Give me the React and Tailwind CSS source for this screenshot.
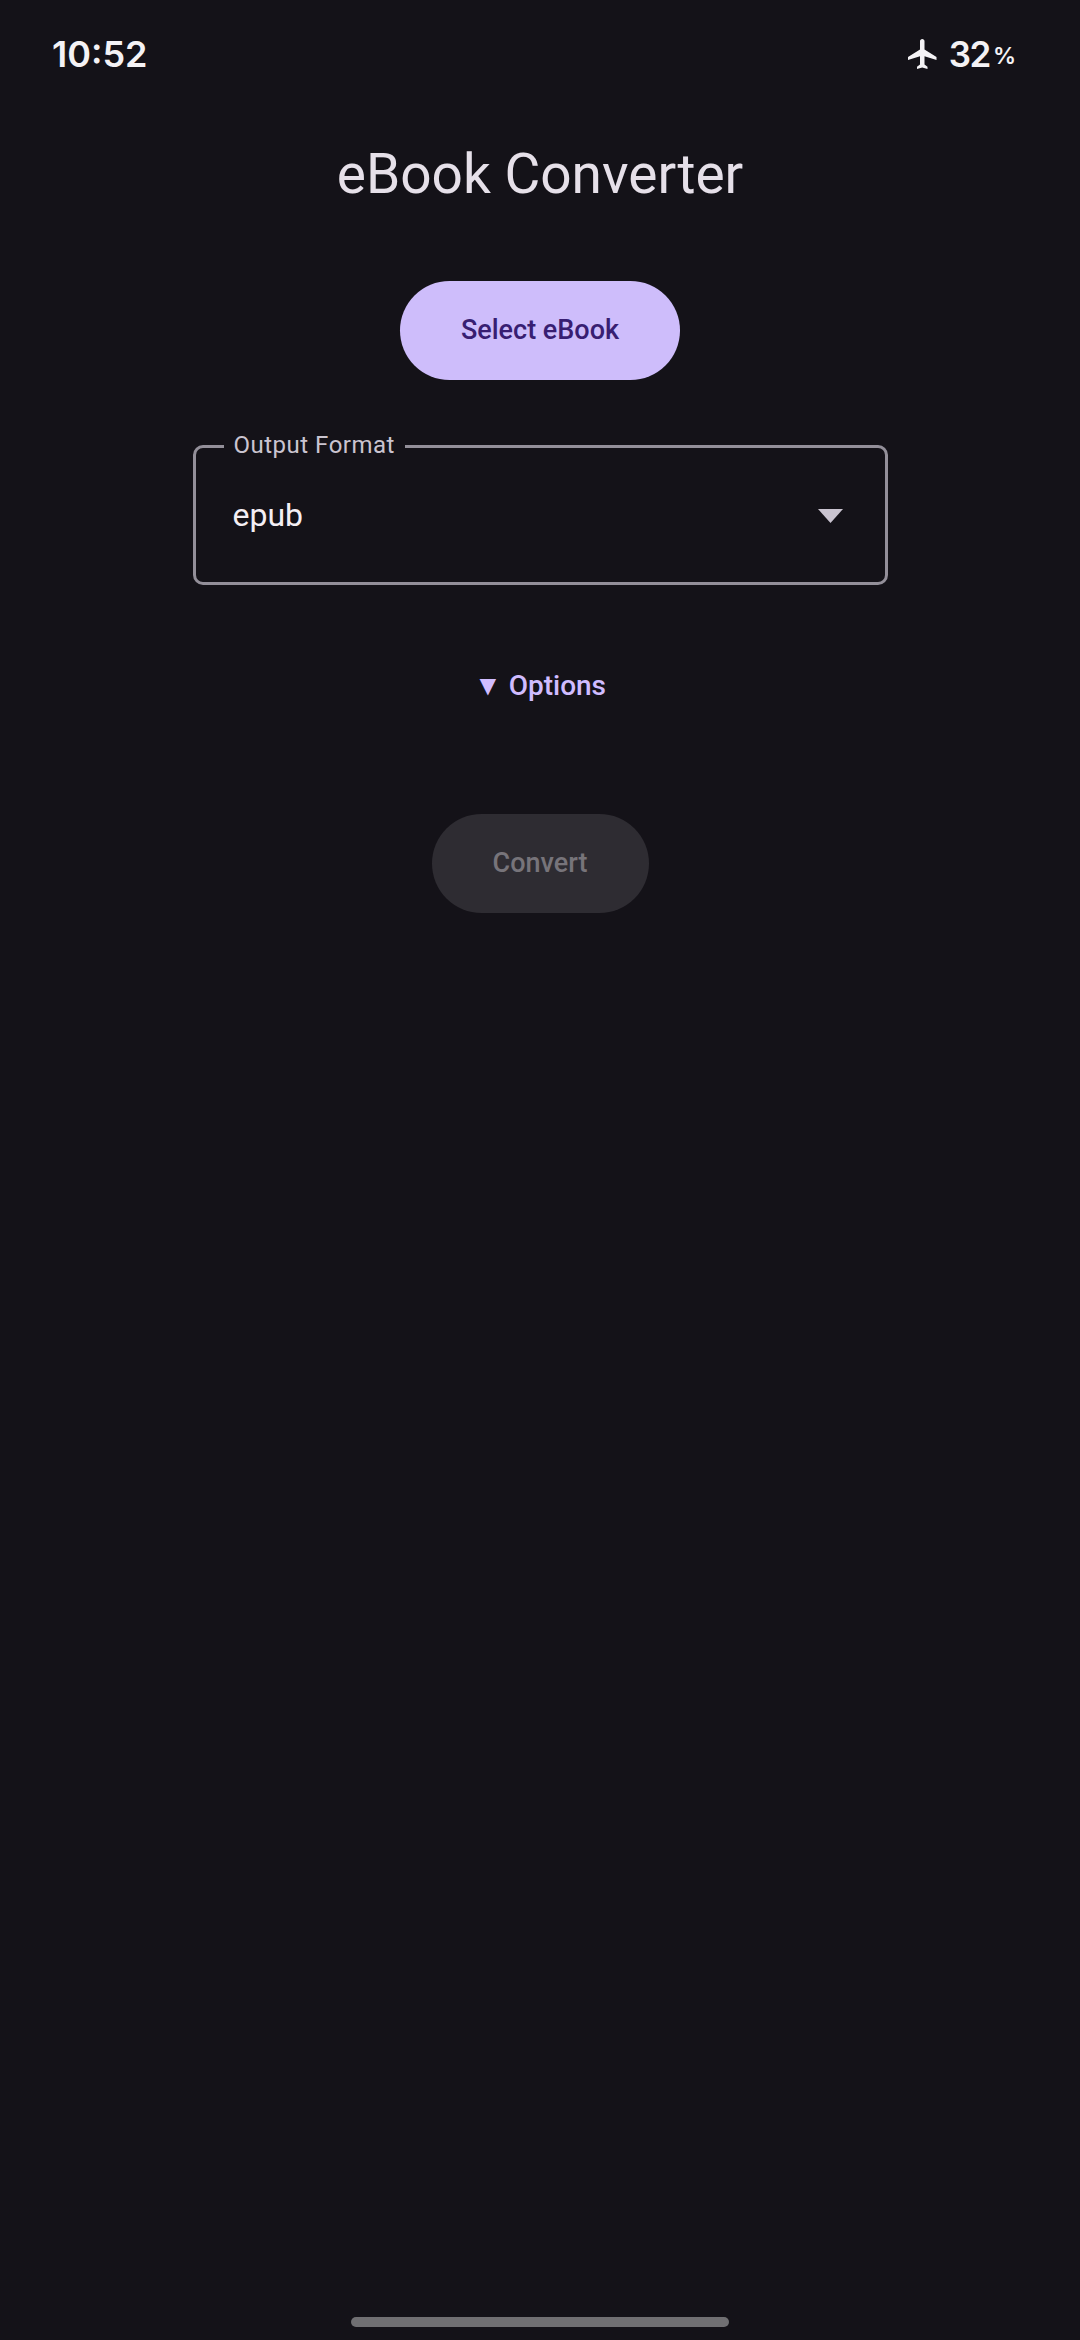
export default function App() {
  return (
    <div className="flex flex-col items-center w-[1080px] h-[2340px] bg-[#141218] font-['Roboto',sans-serif] overflow-hidden">
      {/* status bar */}
      <div className="flex justify-between items-center w-full h-[54px] mt-[27px] pl-[52px] pr-[64px] text-[#f4f2f5] font-['Inter',sans-serif]">
        <span className="text-[36px] font-semibold leading-none">10:52</span>
        <div className="flex items-center">
          <svg viewBox="0 0 24 24" className="w-[36px] h-[36px] mr-[8px]" fill="currentColor">
            <path d="M21 16v-2l-8-5V3.5c0-.83-.67-1.5-1.5-1.5S10 2.67 10 3.5V9l-8 5v2l8-2.5V19l-2 1.5V22l3.5-1 3.5 1v-1.5L13 19v-5.5l8 2.5z" />
          </svg>
          <span className="text-[35px] font-semibold leading-none tracking-[-1.5px]">32</span>
          <span className="text-[23px] font-semibold leading-none ml-[3px] mt-[4px]">%</span>
        </div>
      </div>

      <h1 className="mt-[51px] h-[84px] text-[55px] leading-[84px] text-[#e6e0e9]">eBook Converter</h1>

      <button className="mt-[65px] w-[280px] h-[99px] rounded-[50px] bg-[#cebdfb] text-[#381e72] text-[27px] font-medium">Select eBook</button>

      <div className="relative mt-[65px] w-[695px] h-[140px] flex items-center justify-between pl-[37px] pr-[42px] border-[3px] border-[#938f99] rounded-[10px]">
        <span className="absolute left-[28px] -top-[19px] px-[10px] bg-[#141218] text-[#cac4d0] text-[24px] leading-[32px] tracking-[0.5px]">Output Format</span>
        <span className="text-[32px] text-[#f4eff4] leading-none">epub</span>
        <svg viewBox="0 0 25 14" className="w-[25px] h-[14px] mt-[2px]" fill="#cac4d0">
          <path d="M0 0h25L12.5 14z" />
        </svg>
      </div>

      <button className="mt-[76px] h-[50px] flex items-center justify-center text-[#d0bcff] text-[28px] font-medium">▼ Options</button>

      <button className="mt-[103px] w-[217px] h-[99px] rounded-[50px] bg-[#2e2c32] text-[#77747a] text-[27px] font-medium">Convert</button>

      {/* gesture pill */}
      <div className="mt-auto mb-[13px] w-[378px] h-[10px] rounded-full bg-[#706f72]" />
    </div>
  );
}
